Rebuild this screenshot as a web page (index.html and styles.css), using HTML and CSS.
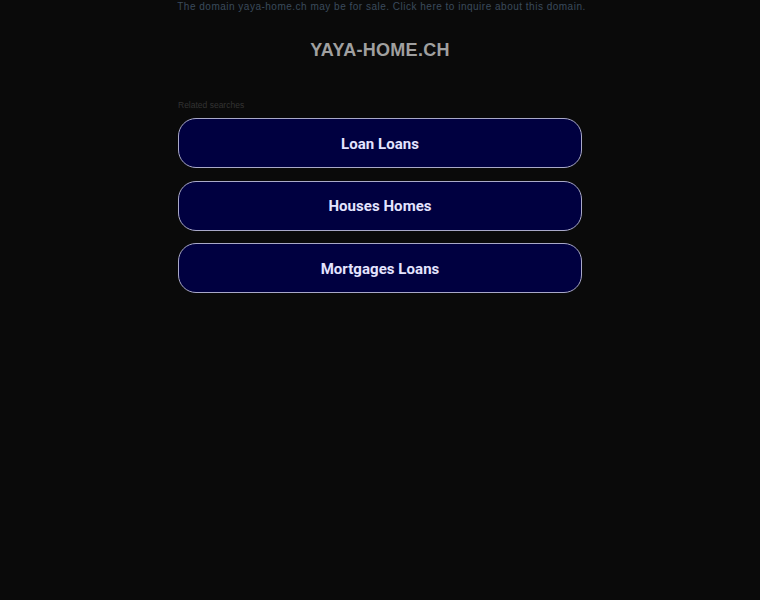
FILE: index.html
```html
<!DOCTYPE html>
<html>
<head>
<meta charset="utf-8">
<link rel="stylesheet" href="styles.css">
</head>
<body>
<div class="page">
  <div class="sale">The domain yaya-home.ch may be for sale. Click here to inquire about this domain.</div>
  <h1 class="title">YAYA-HOME.CH</h1>
  <div class="related">Related searches</div>
  <div class="links">
    <a class="btn">Loan Loans</a>
    <a class="btn">Houses Homes</a>
    <a class="btn">Mortgages Loans</a>
  </div>
</div>
</body>
</html>
```
FILE: styles.css
```css
html, body {
  margin: 0;
  padding: 0;
  background: #0a0a0a;
  font-family: "Liberation Sans", Arial, sans-serif;
}
.page {
  width: 404px;
  margin: 0 auto;
}
.sale {
  font-size: 10px;
  letter-spacing: 0.5px;
  color: #3b4a5c;
  text-align: center;
  white-space: nowrap;
  margin-left: -7px;
  margin-right: -10px;
  line-height: 13px;
}
.title {
  margin: 26px 0 0;
  font-size: 18px;
  font-weight: bold;
  color: #a0a0a0;
  text-align: center;
  letter-spacing: 0.3px;
  line-height: 22px;
}
.related {
  margin-top: 39px;
  font-size: 8.5px;
  color: #333333;
  line-height: 11px;
}
.links {
  margin-top: 7px;
  display: flex;
  flex-direction: column;
  gap: 12.5px;
}
.btn {
  display: flex;
  align-items: center;
  justify-content: center;
  height: 48px;
  border: 1px solid #a9a9c8;
  border-radius: 18px;
  background: #000040;
  color: #e4e4ff;
  font-family: Roboto, "Liberation Sans", sans-serif;
  font-size: 15px;
  font-weight: bold;
  letter-spacing: 0.05px;
  padding-top: 1px;
  box-sizing: content-box;
  height: 47px;
}
```
